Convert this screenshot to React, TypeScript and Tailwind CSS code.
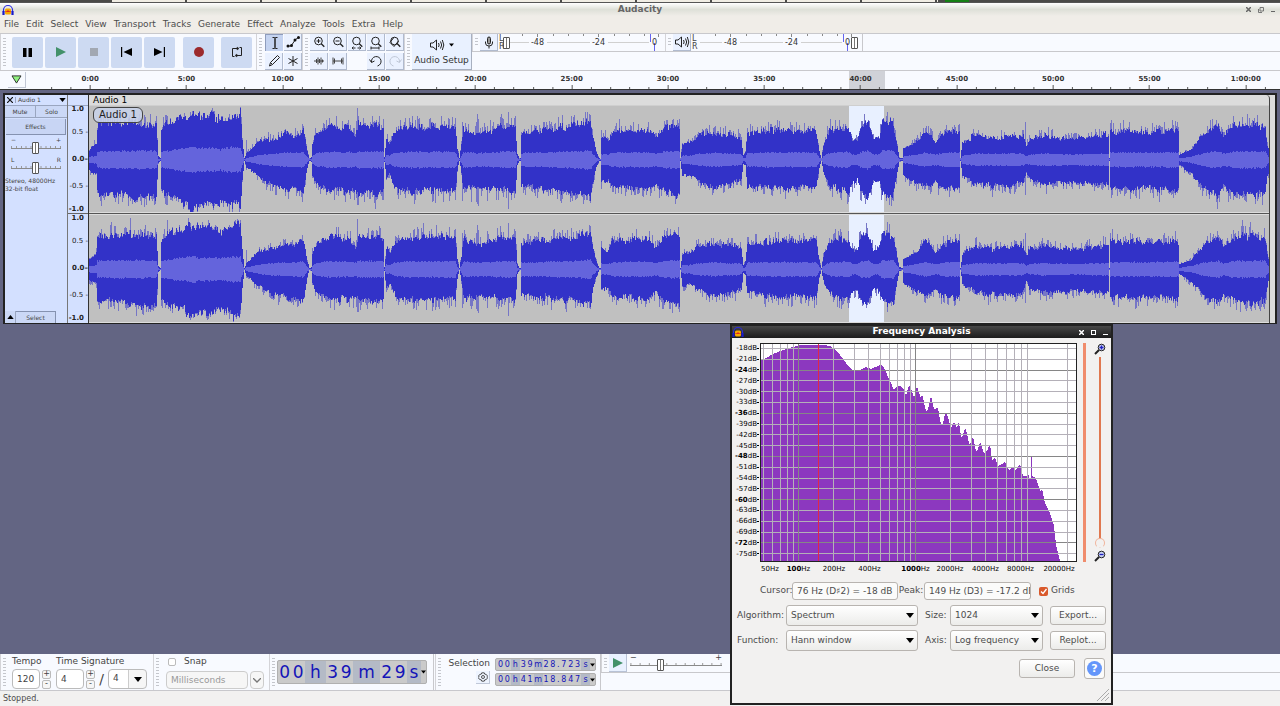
import type { ReactNode } from "react";

/* ---------- DATA ---------- */

const menus = ["File", "Edit", "Select", "View", "Transport", "Tracks", "Generate", "Effect", "Analyze", "Tools", "Extra", "Help"];

const times = ["0:00", "5:00", "10:00", "15:00", "20:00", "25:00", "30:00", "35:00", "40:00", "45:00", "50:00", "55:00", "1:00:00"];

// [x, peak up, peak down]
const envelope = [
  [0, 10, 12], [7, 16, 14], [8, 32, 32], [30, 35, 33], [50, 34, 37], [67, 32, 35], [69, 3, 3], [71, 1, 1], [72, 31, 32],
  [81, 37, 35], [96, 41, 42], [101, 44, 49], [111, 40, 42], [121, 42, 42], [131, 38, 41], [141, 43, 46], [151, 44, 45],
  [153, 20, 20], [155, 1, 1], [157, 6, 7], [171, 19, 18], [184, 20, 26], [195, 25, 28], [206, 23, 30], [214, 29, 31],
  [218, 8, 8], [220, 1, 1], [222, 2, 2], [223, 15, 15], [228, 27, 25], [241, 32, 29], [261, 30, 30], [266, 22, 28],
  [269, 33, 32], [294, 31, 32], [295, 2, 2], [297, 20, 18], [300, 17, 15], [306, 27, 27], [321, 32, 31], [345, 31, 30],
  [366, 32, 30], [368, 10, 10], [370, 1, 1], [372, 14, 12], [374, 30, 29], [386, 25, 27], [401, 27, 28], [411, 32, 29],
  [426, 31, 32], [428, 5, 5], [430, 1, 1], [431, 1, 1], [432, 26, 26], [461, 29, 29], [491, 33, 32], [501, 37, 38],
  [503, 25, 25], [507, 7, 7], [510, 1, 1], [511, 1, 1], [512, 21, 20], [519, 19, 21], [523, 28, 27], [561, 29, 29],
  [566, 22, 25], [576, 33, 32], [590, 32, 35], [591, 1, 1], [593, 15, 17], [599, 16, 15], [609, 24, 21], [626, 25, 28],
  [646, 23, 22], [652, 21, 20], [654, 4, 4], [656, 8, 6], [658, 25, 25], [681, 28, 28], [711, 28, 27], [727, 27, 27],
  [730, 8, 8], [732, 1, 1], [734, 14, 12], [741, 28, 25], [759, 29, 31], [763, 18, 22], [768, 19, 20], [771, 30, 30],
  [779, 35, 36], [784, 19, 20], [790, 22, 22], [793, 37, 33], [804, 34, 35], [807, 17, 17], [810, 2, 2], [813, 1, 1],
  [814, 10, 14], [826, 16, 22], [836, 28, 26], [846, 17, 22], [856, 26, 28], [870, 28, 28], [871, 1, 1], [873, 15, 15],
  [886, 24, 23], [901, 20, 25], [921, 22, 25], [934, 23, 23], [937, 14, 12], [941, 20, 20], [956, 23, 24], [971, 20, 22],
  [991, 20, 22], [1019, 24, 24], [1020, 1, 1], [1021, 27, 28], [1061, 27, 28], [1089, 28, 30], [1090, 5, 5], [1101, 9, 13],
  [1111, 21, 23], [1121, 28, 31], [1129, 31, 33], [1134, 22, 24], [1146, 33, 33], [1176, 32, 33], [1178, 15, 18], [1180, 7, 9],
];

const loudPeaks: Record<number, [number, number]> = {
  268: [52, 45], 269: [34, 45], 157: [20, 8], 388: [46, 44], 389: [41, 46], 419: [48, 49], 425: [42, 38], 387: [38, 42],
  500: [46, 41], 501: [45, 42], 101: [48, 53], 140: [46, 52], 346: [30, 43], 936: [38, 35], 870: [36, 33], 1075: [38, 30],
  360: [33, 41], 366: [42, 40], 382: [24, 42], 373: [38, 41], 398: [34, 41], 407: [30, 40], 328: [44, 35], 247: [44, 35],
};

const spectrum = [
  [0, 18], [6, 15], [13, 11], [23, 7], [33, 4], [40, 2], [46, 2], [63, 2], [70, 3], [74, 6], [80, 12], [86, 20], [93, 28],
  [100, 27], [106, 24], [111, 26], [118, 23], [121, 21], [124, 25], [130, 38], [134, 47], [137, 43], [140, 43], [144, 46],
  [146, 53], [149, 42], [152, 48], [154, 55], [157, 43], [161, 55], [162, 51], [166, 68], [168, 66], [171, 53], [174, 66],
  [178, 65], [181, 82], [183, 80], [185, 71], [187, 71], [191, 85], [194, 79], [197, 85], [199, 79], [201, 94], [203, 92],
  [205, 85], [207, 90], [209, 101], [211, 100], [213, 94], [216, 108], [218, 106], [220, 99], [224, 110], [227, 108],
  [230, 101], [232, 117], [235, 114], [238, 123], [242, 121], [245, 119], [249, 127], [253, 124], [255, 128], [260, 121],
  [263, 133], [267, 133], [268, 127], [269, 136], [271, 134], [271, 113], [272, 113], [272, 133], [276, 135], [280, 148],
  [282, 146], [285, 160], [290, 170], [294, 183], [296, 202], [300, 218],
];

const freqLabels = [
  { n: "50", w: "w-[22px]" },
  { n: "100", w: "w-[35px]", bold: true },
  { n: "200", w: "w-[36px]" },
  { n: "400", w: "w-[35px]" },
  { n: "1000", w: "ml-3 w-[33px]", bold: true },
  { n: "2000", w: "w-[36px]" },
  { n: "4000", w: "w-[35px]" },
  { n: "8000", w: "w-[35px]" },
  { n: "20000", w: "w-[42px]" },
];

/* ---------- WAVEFORM ---------- */

function levelAt(x: number) {
  let i = 0;
  while (i < envelope.length - 2 && envelope[i + 1][0] <= x) i++;
  const [x0, u0, d0] = envelope[i];
  const [x1, u1, d1] = envelope[i + 1];
  const t = (x - x0) / (x1 - x0);
  return [u0 + (u1 - u0) * t, d0 + (d1 - d0) * t];
}

function buildChannel(mid: number, gain: number, limit: number, start: number) {
  let seed = start;
  const rnd = () => {
    seed = (seed * 16807) % 2147483647;
    return seed / 2147483647;
  };
  let peaks = "";
  let body = "";
  let rms = "";
  let block = 1;
  for (let x = 0; x < 1180; x++) {
    const [u, d] = levelAt(x);
    if (x % 3 === 0) block = 0.98 + 0.16 * rnd();
    const up = u * gain * block * (0.9 + 0.16 * rnd());
    const down = d * gain * block * (0.9 + 0.16 * rnd());
    const a = rnd();
    const b = rnd();
    // the very loud passages stay almost solid
    const spread = u > 36 ? 0.1 : 0.36;
    let pu = up + a * a * a * u * spread;
    let pd = down + b * b * b * d * spread;
    if (loudPeaks[x]) {
      pu = Math.max(pu, loudPeaks[x][0] * gain);
      pd = Math.max(pd, loudPeaks[x][1] * gain);
    }
    const r = ((u + d) / 2) * 0.25 * (0.9 + 0.2 * rnd()) + (u > 38 ? 1 : 0);
    peaks += `M${x} ${(mid - Math.min(pu, limit)).toFixed(1)}h1V${(mid + Math.min(pd, limit)).toFixed(1)}h-1z`;
    body += `M${x} ${(mid - Math.min(up, limit)).toFixed(1)}h1V${(mid + Math.min(down, limit)).toFixed(1)}h-1z`;
    rms += `M${x} ${(mid - r).toFixed(1)}h1V${(mid + r + 0.5).toFixed(1)}h-1z`;
  }
  return { peaks, body, rms };
}

const channels = [buildChannel(53.5, 1, 53, 77), buildChannel(163, 0.96, 53, 4242)];

function Waveform() {
  return (
    <svg viewBox="0 0 1180 217" preserveAspectRatio="none" shapeRendering="crispEdges" className="block h-[217px] w-full bg-[#c0c0c0]">
      <rect x="760" width="35" height="217" fill="#e8f0ff" />
      {channels.map((c, i) => (
        <g key={i}>
          <path d={c.peaks} fill="#7676c6" />
          <path d={c.body} fill="#3232c8" />
          <path d={c.rms} fill="#6464dc" />
        </g>
      ))}
      <path d="M0 106.500H1180M0 108.500H1180" stroke="#dcdcdc" />
      <path d="M0 107.500H1180" stroke="#555" />
      <path d="M0 216.500H1180" stroke="#dcdcdc" />
    </svg>
  );
}

/* ---------- SMALL PIECES ---------- */

function Grip() {
  return (
    <div className="flex w-2 shrink-0 justify-center self-stretch border-l border-[#d4d4d8] py-1">
      <div className="w-[3px] bg-[repeating-linear-gradient(#c4c6cc_0_1px,transparent_1px_3px)]" />
    </div>
  );
}

function Icon({ children }: { children: ReactNode }) {
  return (
    <svg viewBox="0 0 16 16" className="size-4 shrink-0" fill="none" stroke="#222" strokeWidth="1">
      {children}
    </svg>
  );
}

function BigButton({ label, children }: { label: string; children: ReactNode }) {
  return (
    <button aria-label={label} className="flex h-[31px] w-[31px] items-center justify-center rounded-[2px] bg-[#cddaf2]">
      {children}
    </button>
  );
}

function ToolButton({ label, active, children }: { label: string; active?: boolean; children: ReactNode }) {
  return (
    <button
      aria-label={label}
      className={
        active
          ? "flex h-[17px] w-[18px] items-center justify-center border-t border-l border-[#8e9cbc] bg-[#c4d3f0]"
          : "flex h-[17px] w-[18px] items-center justify-center border-r border-b border-[#b0bace] bg-[#eaf1ff]"
      }
    >
      {children}
    </button>
  );
}

function Lens({ children }: { children?: ReactNode }) {
  return (
    <Icon>
      <circle cx="7.500" cy="7" r="3.800" />
      <path d="M10.300 9.800l3 3" strokeWidth="1.300" />
      {children}
    </Icon>
  );
}

function Speaker() {
  return (
    <Icon>
      <path d="M1.500 6v4h2.500l3.500 3V3L4 6z" />
      <path d="M9.500 6q1.300 2 0 4M11.500 4.500q2.400 3.500 0 7M13.300 3q3 5 0 10" />
    </Icon>
  );
}

function Arrow({ size = "h-[5px] w-2" }: { size?: string }) {
  return (
    <svg viewBox="0 0 8 5" className={size} fill="#000">
      <path d="M0 0h8L4 5z" />
    </svg>
  );
}

function Logo() {
  return (
    <svg viewBox="0 0 12 12" className="size-3" fill="none">
      <path d="M1.500 8V6a4.500 4.500 0 0 1 9 0v2" stroke="#2a2ae0" strokeWidth="1.200" />
      <rect x="3" y="4.500" width="6" height="6" rx="1.500" fill="#f6a800" />
      <path d="M3.500 8l1-1 1 1 .5-1.500.5 1.500 1-1 1 1" stroke="#e02020" strokeWidth="1" />
      <path d="M1.500 7v4M10.500 7v4" stroke="#1a1ac8" strokeWidth="2.200" />
    </svg>
  );
}

function TickSlider({ label, value, width }: { label: string; value: number; width: string }) {
  return (
    <div className={`relative h-3 ${width}`}>
      <svg viewBox="0 0 100 12" preserveAspectRatio="none" className="block h-3 w-full" stroke="#9a9a9a">
        <path d="M0 6.500H100" stroke="#8a8a8a" vectorEffect="non-scaling-stroke" />
        {[1, 11, 21, 30, 40, 50, 60, 70, 79, 89, 99].map((x) => (
          <path key={x} d={`M${x} 4V6`} vectorEffect="non-scaling-stroke" />
        ))}
      </svg>
      <input
        type="range"
        aria-label={label}
        defaultValue={value}
        className="absolute inset-0 h-3 w-full appearance-none bg-transparent [&::-webkit-slider-thumb]:h-3 [&::-webkit-slider-thumb]:w-[7px] [&::-webkit-slider-thumb]:appearance-none [&::-webkit-slider-thumb]:rounded-[1px] [&::-webkit-slider-thumb]:border [&::-webkit-slider-thumb]:border-[#555] [&::-webkit-slider-thumb]:bg-[linear-gradient(90deg,#fff_2px,#777_2px,#777_3px,#fff_3px)]"
      />
    </div>
  );
}

function Meter({ label, thumb }: { label: string; thumb: "left" | "right" }) {
  return (
    <div className="flex h-[17px] items-center">
      <div className="flex w-[9px] flex-col pl-px text-[8px] leading-[8px] text-[#444]">
        <span>L</span>
        <span>R</span>
      </div>
      <div className="relative flex h-[17px] w-[154px] items-center">
        <svg viewBox="0 0 154 17" className="absolute inset-0 h-full w-full" stroke="#888">
          <path d="M0 8.500H22M40 8.500H83M101 8.500H142" stroke="#d0d0d0" />
          <path d="M15.500 0v2M30.500 0v3M46.500 0v2M61.500 0v2M76.500 0v2M91.500 0v3M107.500 0v2M122.500 0v2M137.500 0v2M151.500 0v3" />
          <path d="M143.500 0V8M147.500 9V17" stroke="#6464f0" />
        </svg>
        <div className="relative flex flex-1 text-center text-[8px] leading-none text-[#333]">
          <span className="w-[61px]">-48</span>
          <span className="w-[61px]">-24</span>
          <span className="flex-1 pr-1 text-right">0</span>
        </div>
        <button
          aria-label={label}
          className={
            thumb === "left"
              ? "absolute -left-1 h-3 w-[7px] rounded-[1px] border border-[#555] bg-[linear-gradient(90deg,#fff_2px,#777_2px,#777_3px,#fff_3px)]"
              : "absolute -right-1 h-3 w-[7px] rounded-[1px] border border-[#555] bg-[linear-gradient(90deg,#fff_2px,#777_2px,#777_3px,#fff_3px)]"
          }
        />
      </div>
    </div>
  );
}

/* ---------- TOOLBARS ---------- */

function Toolbars() {
  return (
    <div className="flex h-[38px] border-y border-[#c8c8cc] bg-[#f8faff]">
      <Grip />
      <div className="flex items-center gap-[2px] pr-1 pl-1">
        <BigButton label="Pause">
          <svg viewBox="0 0 9 9" className="size-[9px]"><path d="M0 0h3.500v9H0zM5.500 0H9v9H5.500z" /></svg>
        </BigButton>
        <BigButton label="Play">
          <svg viewBox="0 0 10 10" className="size-[10px]" fill="#43916a"><path d="M0 0l10 5-10 5z" /></svg>
        </BigButton>
        <BigButton label="Stop">
          <span className="size-2 bg-[#a2a8b2]" />
        </BigButton>
        <BigButton label="Skip to start">
          <svg viewBox="0 0 11 10" className="h-[10px] w-[11px]"><path d="M0 0h1.200v10H0zM11 1v8L2.500 5z" /></svg>
        </BigButton>
        <BigButton label="Skip to end">
          <svg viewBox="0 0 11 10" className="h-[10px] w-[11px]"><path d="M9.800 0H11v10H9.800zM0 1v8l8.500-4z" /></svg>
        </BigButton>
        <div className="ml-[6px]">
          <BigButton label="Record">
            <span className="size-[10px] rounded-full bg-[#9c2a2c]" />
          </BigButton>
        </div>
        <div className="ml-[5px]">
          <BigButton label="Loop">
            <svg viewBox="0 0 12 12" className="size-3" fill="none" stroke="#222">
              <path d="M3.500 10.500h-2v-8H7M8.500 1.500h2v8H5" />
              <path d="M6 1l2 1.500L6 4zM6 8L4 9.500 6 11z" fill="#222" strokeWidth=".5" />
            </svg>
          </BigButton>
        </div>
      </div>
      <Grip />
      <div className="grid grid-cols-2 content-between gap-x-px pl-px">
        <ToolButton label="Selection tool" active>
          <Icon><path d="M5.500 2.500h2q.5 0 .5 1v9q0 1-.5 1h-2M10.500 2.500h-2q-.5 0-.5 1v9q0 1 .5 1h2" /></Icon>
        </ToolButton>
        <ToolButton label="Envelope tool">
          <Icon>
            <path d="M3 12h3l4.500-6.500 3-2" />
            <circle cx="3" cy="12" r="1.500" fill="#111" stroke="none" />
            <circle cx="6.500" cy="11.500" r="1.500" fill="#111" stroke="none" />
            <circle cx="10" cy="6" r="1.500" fill="#111" stroke="none" />
            <circle cx="13.500" cy="3.500" r="1.500" fill="#111" stroke="none" />
          </Icon>
        </ToolButton>
        <ToolButton label="Draw tool">
          <Icon><path d="M3.500 13l1-3.500 7-7L13.500 4.500l-7 7zM4.500 9.500L6.500 11.500" /></Icon>
        </ToolButton>
        <ToolButton label="Multi tool">
          <Icon><path d="M8 3v10M3.500 5.500l9 5M12.500 5.500l-9 5" /></Icon>
        </ToolButton>
      </div>
      <Grip />
      <div className="grid grid-cols-5 content-between gap-x-px">
        <ToolButton label="Zoom in"><Lens><path d="M5.500 7h4M7.500 5v4" /></Lens></ToolButton>
        <ToolButton label="Zoom out"><Lens><path d="M5.500 7h4" /></Lens></ToolButton>
        <ToolButton label="Fit selection"><Lens><path d="M3 14h3.500M8.500 14H12" /><path d="M4.500 12.500L3 14l1.500 1.500M10.500 12.500L12 14l-1.500 1.500" strokeWidth=".8" /></Lens></ToolButton>
        <ToolButton label="Fit project"><Lens><path d="M3 12.500v3M3 14h8M11 12.500v3" /></Lens></ToolButton>
        <ToolButton label="Zoom toggle"><Lens><path d="M7 3.300L3 8.500l4 4L11.500 7" /></Lens></ToolButton>
        <ToolButton label="Trim"><Icon><path d="M3 8h10M5.500 6v4M7 4.500v7M8.500 6v4M10 4.500v7M11.500 6.500v3" stroke="#444" /></Icon></ToolButton>
        <ToolButton label="Silence"><Icon><path d="M3 8h10M3 4.500v7M4.500 5.500v5M11.500 5.500v5M13 4.500v7" stroke="#444" /></Icon></ToolButton>
        <span />
        <ToolButton label="Undo"><Icon><path d="M3.500 9A4.800 4.800 0 1 1 9.500 13M1.500 6.500L3.500 9.500l3-1.500" /></Icon></ToolButton>
        <ToolButton label="Redo"><Icon><path d="M12.500 9A4.800 4.800 0 1 0 6.500 13M14.500 6.500l-2 3-3-1.500" stroke="#bfc7d6" /></Icon></ToolButton>
      </div>
      <Grip />
      <button className="flex w-[60px] flex-col items-center justify-center gap-px border-r border-b border-[#a8b0c0] bg-[#e9f1ff] text-[9px] leading-[12px] text-[#333]">
        <span className="flex items-center gap-1">
          <Speaker />
          <Arrow size="h-1 w-[5px]" />
        </span>
        Audio Setup
      </button>
      <div className="flex flex-1 flex-col">
        <div className="flex border-b border-[#c8c8cc]">
          <Grip />
          <ToolButton label="Recording level">
            <Icon><rect x="6.500" y="3" width="3" height="7" rx="1.500" fill="#999" /><path d="M4.500 7.500V9q0 3 3.500 3t3.500-3V7.500M8 12v2.500" /></Icon>
          </ToolButton>
          <Meter label="Recording volume" thumb="left" />
          <div className="ml-1 flex">
            <Grip />
          </div>
          <ToolButton label="Playback level"><Speaker /></ToolButton>
          <Meter label="Playback volume" thumb="right" />
          <div className="ml-2 border-l border-[#c8c8cc]" />
        </div>
      </div>
    </div>
  );
}

/* ---------- TIMELINE ---------- */

function Timeline() {
  return (
    <div className="relative flex h-[19px] overflow-hidden border-b border-[#333] bg-[#f8faff]">
      <div className="absolute inset-y-0 left-[66.33%] w-[2.8%] bg-[#d0d2d8]" />
      <button aria-label="Pinned play head" className="my-px ml-2 flex w-[18px] items-center justify-center border-r border-b border-[#c0c6d4]">
        <svg viewBox="0 0 12 10" className="h-[9px] w-[11px]" fill="#90f080" stroke="#222" strokeWidth="1">
          <path d="M1 1h10L6 9z" />
        </svg>
      </button>
      <div className="relative -mr-[14px] ml-4 grid flex-1 grid-cols-13">
        {times.map((t) => (
          <div key={t} className="flex flex-col items-center justify-between pt-1">
            <span className="text-[7px] leading-[9px] font-bold text-[#333]">{t}</span>
            <svg viewBox="0 0 100 4" preserveAspectRatio="none" className="block h-1 w-full" stroke="#555">
              <path d="M50 0V4M10 2V4M30 2V4M70 2V4M90 2V4" vectorEffect="non-scaling-stroke" />
            </svg>
          </div>
        ))}
      </div>
    </div>
  );
}

/* ---------- TRACK ---------- */

function VerticalScale() {
  return (
    <div className="flex h-[107px] flex-col justify-between text-[7px] leading-[7px] whitespace-nowrap text-[#222]">
      <span className="pr-1 text-right font-bold">1.0</span>
      <div className="text-right leading-[27px]">
        <div>0.5 -</div>
        <div className="font-bold">0.0–</div>
        <div>-0.5 -</div>
      </div>
      <span className="pr-1 text-right font-bold">-1.0</span>
    </div>
  );
}

function Track() {
  return (
    <div className="mx-[3px] mt-[3px] flex border-2 border-b border-[#222] bg-[#dcdcdc] text-[#444]">
      {/* CONTROL PANEL */}
      <div className="flex w-[62px] flex-col bg-[#d3e0ff] text-[6px] leading-none">
        <div className="flex h-[11px] items-center border-b border-[#9aa6c0]">
          <button aria-label="Close track" className="flex w-[10px] justify-center">
            <svg viewBox="0 0 6 6" className="size-[6px]" stroke="#111" strokeWidth="1.200"><path d="M0 0l6 6M6 0L0 6" /></svg>
          </button>
          <button className="flex flex-1 items-center justify-between border-l border-[#9aa6c0] pr-px pl-[2px]">
            Audio 1
            <Arrow size="h-1 w-[7px]" />
          </button>
        </div>
        <div className="grid h-3 grid-cols-2 border-b border-[#9aa6c0] bg-[#cbd8f6]">
          <button className="border-r border-[#9aa6c0]">Mute</button>
          <button>Solo</button>
        </div>
        <button className="mx-px mt-px h-4 border-r border-b border-[#8592b0] bg-[#c8d5f4]">Effects</button>
        <div className="flex flex-col px-[6px] pt-[3px]">
          <div className="flex h-1 justify-between leading-[4px]"><span>−</span><span>+</span></div>
          <TickSlider label="Gain" value={48} width="w-full" />
          <div className="mt-[3px] flex h-[5px] justify-between leading-[5px]"><span>L</span><span>R</span></div>
          <TickSlider label="Pan" value={48} width="w-full" />
        </div>
        <p className="mt-[3px] leading-[8px] whitespace-nowrap">
          Stereo, 48000Hz
          <br />
          32-bit float
        </p>
        <div className="mt-auto flex h-3">
          <button aria-label="Collapse" className="flex w-[11px] items-center justify-center border-r border-[#9aa6c0] bg-[#cbd8f6]">
            <svg viewBox="0 0 8 5" className="h-1 w-[7px]"><path d="M0 5h8L4 0z" /></svg>
          </button>
          <button className="w-10 border-t border-r border-[#8592b0] bg-[#cbd8f6]">Select</button>
        </div>
      </div>

      {/* SCALE */}
      <div className="w-[22px] border-r border-l border-[#777] border-r-[#333] bg-[#d3e0ff]">
        <div className="h-[11px] border-b border-[#9aa6c0]" />
        <VerticalScale />
        <div className="border-t border-[#666] pt-px"><VerticalScale /></div>
      </div>

      {/* CLIP */}
      <div className="relative flex-1 overflow-hidden rounded-t border-r border-[#444]">
        <div className="h-[11px] border-b border-[#cfcfcf] pl-1 text-[9px] leading-[10px] text-black">Audio 1</div>
        <Waveform />
        <div className="absolute top-3 left-1 rounded-md border border-[#444] bg-[#c8d2e8]/90 px-[5px] text-[10px] leading-[14px] text-[#222]">
          Audio 1
        </div>
      </div>
      <div className="w-[5px] bg-[#dcdcdc]" />
    </div>
  );
}

/* ---------- BOTTOM BAR ---------- */

function Spin() {
  return (
    <div className="flex flex-col gap-px">
      <button className="flex size-[9px] items-center justify-center rounded-[2px] border border-[#bbb] bg-[#f6f6f6] text-[8px] leading-none">+</button>
      <button className="flex size-[9px] items-center justify-center rounded-[2px] border border-[#bbb] bg-[#f6f6f6] text-[8px] leading-none">-</button>
    </div>
  );
}

function Digits({ text }: { text: string }) {
  return (
    <div className="flex h-[13px] w-[101px] items-center rounded-[2px] border border-[#b0b0b0] bg-[#cacaca] pl-px text-[8px] text-[#1414b8]">
      {text.split("").map((c, i) => (
        <span
          key={i}
          className={
            c === "." ? "w-1 text-center" : /\d/.test(c) ? "w-[7px] text-center" : "h-full w-[9px] bg-[#b4bac6] text-center leading-[11px]"
          }
        >
          {c}
        </span>
      ))}
      <button aria-label="Time format" className="ml-auto">
        <Arrow size="h-1 w-[5px]" />
      </button>
    </div>
  );
}

function BottomBar() {
  return (
    <div className="flex h-[37px] border-b border-[#c8c8cc] bg-[#f8faff] text-[9px] text-[#444]">
      <Grip />
      <div className="flex gap-[5px] pr-[6px] pl-1">
        <div>
          <label htmlFor="tempo" className="block leading-[14px]">Tempo</label>
          <div className="mt-px flex items-center gap-[2px]">
            <input id="tempo" defaultValue="120" className="h-5 w-[28px] rounded border border-[#bbb] bg-white px-1" />
            <Spin />
          </div>
        </div>
        <div>
          <label htmlFor="upper" className="block leading-[14px]">Time Signature</label>
          <div className="mt-px flex items-center gap-[2px]">
            <input id="upper" defaultValue="4" className="h-5 w-[28px] rounded border border-[#bbb] bg-white px-1" />
            <Spin />
            <span className="w-[9px] text-center text-[14px] leading-none">/</span>
            <div className="relative flex items-center">
              <select aria-label="Lower time signature" className="h-5 w-[39px] appearance-none rounded border border-[#bbb] bg-[linear-gradient(90deg,#fff_19px,#ccc_19px,#ccc_20px,#f6f6f6_20px)] pl-1">
                <option>4</option>
              </select>
              <span className="pointer-events-none absolute right-[5px]"><Arrow /></span>
            </div>
          </div>
        </div>
      </div>
      <Grip />
      <div className="px-[5px]">
        <label className="flex h-4 items-center gap-2 pl-[2px]">
          <input type="checkbox" className="size-2 appearance-none rounded-[2px] border border-[#bbb] bg-white" />
          Snap
        </label>
        <div className="mt-px flex gap-[2px]">
          <input aria-label="Snap to" disabled defaultValue="Milliseconds" className="h-[18px] w-[82px] rounded border border-[#ccc] bg-[#f6f6f6] px-1 text-[#999]" />
          <button aria-label="Snap options" className="flex h-[18px] w-[14px] items-center justify-center rounded border border-[#ccc] bg-[#f6f6f6]">
            <svg viewBox="0 0 8 5" className="h-[5px] w-2" fill="none" stroke="#777" strokeWidth="1.300"><path d="M0 0l4 4 4-4" /></svg>
          </button>
        </div>
      </div>
      <Grip />
      <div className="flex items-center pr-[6px]">
        <div className="flex h-6 w-[150px] items-center rounded-[2px] border border-[#b0b0b0] bg-[#cacaca] text-[17px] leading-[22px] text-[#1414b8]">
          {["00", "h", "39", "m", "29", "s"].map((part, i) =>
            i % 2 === 0 ? (
              <span key={i} className="flex w-[27px] justify-around">
                <span>{part[0]}</span>
                <span>{part[1]}</span>
              </span>
            ) : (
              <span key={i} className={part === "m" ? "w-[27px] bg-[#b4bac6] text-center" : part === "s" ? "w-[14px] bg-[#b4bac6] text-center" : "w-[21px] bg-[#b4bac6] text-center"}>
                {part}
              </span>
            )
          )}
          <button aria-label="Time format" className="ml-auto">
            <Arrow size="h-1 w-[5px]" />
          </button>
        </div>
      </div>
      <div className="w-[2px] border-l border-[#c8c8cc]" />
      <Grip />
      <div className="flex gap-[5px] pr-1 pl-px">
        <div className="flex w-[46px] flex-col items-end pt-[2px]">
          <span className="leading-[15px]">Selection</span>
          <button aria-label="Selection options" className="flex h-[13px] w-[14px] items-center justify-center border-r border-b border-[#c0c8d8] bg-[#eef4ff]">
            <svg viewBox="0 0 12 12" className="size-[10px]" fill="none" stroke="#333">
              <path d="M4.500 1h3l.5 1.500 2 .5 1.500 2-1 1 1 1-1.500 2-2 .5-.5 1.500h-3L4 9.500 2 9 .5 7l1-1-1-1L2 3l2-.5z" />
              <circle cx="6" cy="6" r="1.800" />
            </svg>
          </button>
        </div>
        <div className="flex flex-col gap-[2px] pt-1">
          <Digits text="00h39m28.723s" />
          <Digits text="00h41m18.847s" />
        </div>
      </div>
      <div className="flex-1 border-l border-[#c8c8cc]">
        <div className="flex h-[19px] items-center border-b border-[#c8c8cc]">
          <Grip />
          <button aria-label="Play at speed" className="flex h-[18px] w-[18px] items-center justify-center border-r border-b border-[#b8c2d6] bg-[#e9f1ff]">
            <svg viewBox="0 0 10 10" className="size-[10px]" fill="#43916a"><path d="M0 0l10 5-10 5z" /></svg>
          </button>
          <div className="ml-[3px]">
            <div className="flex h-1 w-[92px] justify-between text-[8px] leading-[6px]"><span>−</span><span>+</span></div>
            <TickSlider label="Playback speed" value={32} width="w-[92px]" />
          </div>
        </div>
      </div>
    </div>
  );
}

/* ---------- FREQUENCY ANALYSIS ---------- */

function SpectrumPlot() {
  const outline = spectrum.map(([x, y]) => `L${x} ${y}`).join("");
  const minor: number[] = [];
  const major = [38, 155];
  for (const f of [50, 60, 70, 80, 90, 200, 300, 400, 500, 600, 700, 800, 900, 2000, 3000, 4000, 5000, 6000, 7000, 8000, 9000, 20000]) {
    minor.push(Math.round(38 + 117 * Math.log10(f / 100)));
  }
  const rows = Array.from({ length: 20 }, (_, i) => i);
  return (
    <svg viewBox="0 0 317 219" shapeRendering="crispEdges" className="block h-[219px] w-[317px] bg-white" fill="none">
      <path d={`M0 219${outline}L317 219z`} fill="#8c38bf" />
      {rows.map((i) => (
        <path key={i} d={`M0 ${Math.round(5 + i * 10.8) + 0.5}H317`} stroke={i % 4 === 2 ? "#868686" : "#b4b0b8"} />
      ))}
      {minor.map((x) => (
        <path key={x} d={`M${x + 0.5} 0V219`} stroke="#b4b0b8" />
      ))}
      {major.map((x) => (
        <path key={x} d={`M${x + 0.5} 0V219`} stroke="#868686" />
      ))}
      <path d="M58.500 0V219" stroke="#e02848" />
      <rect x=".5" y=".5" width="316" height="218" stroke="#222" />
    </svg>
  );
}

function ZoomGlyph({ plus }: { plus?: boolean }) {
  return (
    <svg viewBox="0 0 12 12" className="size-3" fill="none" stroke="#222">
      <path d="M5 7L1 11" strokeWidth="2" />
      <circle cx="7.500" cy="4.500" r="3.300" fill="#c8d0f0" />
      <path d={plus ? "M5.500 4.500h4M7.500 2.500v4" : "M5.500 4.500h4"} stroke="#2020c0" strokeWidth="1.300" />
    </svg>
  );
}

function Choice({ id, label, value, labelWidth, width }: { id: string; label: string; value: string; labelWidth: string; width: string }) {
  return (
    <>
      <label htmlFor={id} className={labelWidth}>{label}</label>
      <div className="relative flex items-center">
        <select id={id} className={`h-[21px] appearance-none rounded-[3px] border border-[#b8b4b0] bg-linear-to-b from-white to-[#ececea] pl-1 ${width}`}>
          <option>{value}</option>
        </select>
        <span className="pointer-events-none absolute right-1"><Arrow /></span>
      </div>
    </>
  );
}

function PushButton({ children }: { children: ReactNode }) {
  return (
    <button className="h-[19px] w-14 rounded-[3px] border border-[#b8b4b0] bg-linear-to-b from-white to-[#ececea]">{children}</button>
  );
}

function FrequencyWindow() {
  return (
    <div className="absolute top-[324px] left-[730px] w-[383px] border-2 border-[#222] bg-[#f2f1f0] text-[9px] text-[#4c4c4c]">
      <div className="flex h-3 items-center bg-linear-to-b from-[#484848] to-[#1c1c1c] text-white">
        <Logo />
        <h2 className="flex-1 pl-6 text-center font-bold">Frequency Analysis</h2>
        <div className="flex w-9 items-center justify-around">
          <svg viewBox="0 0 5 5" className="size-[5px]" stroke="#fff" strokeWidth="1.500"><path d="M0 0l5 5M5 0L0 5" /></svg>
          <span className="size-[5px] border border-white" />
          <span className="mt-1 h-px w-[5px] bg-white" />
        </div>
      </div>

      {/* PLOT */}
      <div className="flex pt-[5px]">
        <div className="w-7">
          <div className="flex h-[216px] flex-col pr-px text-right text-[7px] leading-[10px] text-black">
            {Array.from({ length: 20 }, (_, i) => (
              <div key={i} className="flex flex-1 items-center justify-end">
                <span className={i % 4 === 2 ? "font-bold" : ""}>{-18 - i * 3}</span>dB<span className="h-px w-[2px] bg-black" />
              </div>
            ))}
          </div>
        </div>
        <SpectrumPlot />
        <div className="ml-[6px] w-[3px] bg-[#f08c6c]" />
        <div className="ml-2 flex h-[219px] w-3 flex-col items-center justify-between">
          <ZoomGlyph plus />
          <input
            type="range"
            aria-label="Vertical zoom"
            defaultValue={0}
            className="h-[191px] w-[10px] appearance-none bg-[linear-gradient(90deg,transparent_4px,#e07850_4px,#e07850_6px,transparent_6px)] [direction:rtl] [writing-mode:vertical-lr] [&::-webkit-slider-thumb]:size-[10px] [&::-webkit-slider-thumb]:appearance-none [&::-webkit-slider-thumb]:rounded-full [&::-webkit-slider-thumb]:border [&::-webkit-slider-thumb]:border-[#f0b49c] [&::-webkit-slider-thumb]:border-b-transparent [&::-webkit-slider-thumb]:bg-[#f2f1f0]"
          />
          <ZoomGlyph />
        </div>
      </div>
      <div className="flex h-[13px] pl-[27px] text-[7px] leading-[14px] text-black">
        {freqLabels.map((f) => (
          <div key={f.n} className={`text-center whitespace-nowrap ${f.w}`}>
            <span className={f.bold ? "font-bold" : ""}>{f.n}</span>Hz
          </div>
        ))}
      </div>

      {/* CONTROLS */}
      <div className="mt-[7px] flex items-center pl-7">
        <label htmlFor="cursor" className="w-8 whitespace-nowrap">Cursor:</label>
        <input id="cursor" readOnly value="76 Hz (D♯2) = -18 dB" className="h-[18px] w-[106px] rounded-[3px] border border-[#b8b4b0] bg-[#fbfbfa] pl-1" />
        <label htmlFor="peak" className="w-[26px] text-center whitespace-nowrap">Peak:</label>
        <input id="peak" readOnly value="149 Hz (D3) = -17.2 dB" className="h-[18px] w-[107px] rounded-[3px] border border-[#b8b4b0] bg-[#fbfbfa] pl-1" />
        <label className="ml-2 flex items-center gap-[3px]">
          <span className="relative flex">
            <input type="checkbox" defaultChecked className="size-[9px] appearance-none rounded-[2px] bg-[#d9592b]" />
            <svg viewBox="0 0 9 9" className="pointer-events-none absolute inset-0" fill="none" stroke="#fff" strokeWidth="1.300"><path d="M2 4.500L4 6.500 7.500 2" /></svg>
          </span>
          Grids
        </label>
      </div>
      <div className="mt-[5px] flex items-center px-[5px]">
        <Choice id="algorithm" label="Algorithm:" value="Spectrum" labelWidth="w-[49px]" width="w-[132px]" />
        <div className="ml-[7px] flex items-center">
          <Choice id="size" label="Size:" value="1024" labelWidth="w-[25px]" width="w-[93px]" />
        </div>
        <div className="ml-auto flex"><PushButton>Export...</PushButton></div>
      </div>
      <div className="mt-1 flex items-center px-[5px]">
        <Choice id="function" label="Function:" value="Hann window" labelWidth="w-[49px]" width="w-[132px]" />
        <div className="ml-[7px] flex items-center">
          <Choice id="axis" label="Axis:" value="Log frequency" labelWidth="w-[25px]" width="w-[93px]" />
        </div>
        <div className="ml-auto flex"><PushButton>Replot...</PushButton></div>
      </div>
      <div className="mt-[7px] flex items-center justify-end gap-[9px] pr-[6px]">
        <PushButton>Close</PushButton>
        <button className="flex size-[21px] items-center justify-center rounded-[3px] border border-[#b8b4b0] bg-[#fbfbfa]">
          <span className="flex size-[15px] items-center justify-center rounded-full bg-[#6496fa] text-[11px] leading-none font-bold text-white">?</span>
        </button>
      </div>
      <div className="flex h-6 items-end justify-end p-[2px]">
        <svg viewBox="0 0 12 12" className="size-3" stroke="#aaa"><path d="M0 12L12 0M4 12l8-8M8 12l4-4" /></svg>
      </div>
    </div>
  );
}

/* ---------- PAGE ---------- */

export default function App() {
  return (
    <div className="relative flex min-h-screen flex-col overflow-hidden bg-[#636583] font-['DejaVu_Sans',sans-serif]">
      <div className="flex h-[2px] bg-[#4a4a48]">
        <div className="ml-28 w-[826px] bg-[repeating-linear-gradient(90deg,#f0ede4_0_73px,#4a4a48_73px_75px)]" />
        <div className="ml-[7px] w-6 bg-[#158015]" />
      </div>
      <header className="flex h-[14px] items-center border-t border-[#555] bg-linear-to-b from-white via-[#dee0d8] to-[#f0ede8] px-[2px]">
        <Logo />
        <h1 className="flex-1 pl-6 text-center text-[9px] leading-none font-bold text-[#666]">Audacity</h1>
        <div className="flex w-9 items-center justify-around text-[#666]">
          <svg viewBox="0 0 5 5" className="size-[5px]" stroke="#666" strokeWidth="1.500"><path d="M0 0l5 5M5 0L0 5" /></svg>
          <svg viewBox="0 0 6 6" className="size-[6px]" stroke="#777" fill="none"><path d="M2 .5h3.500V4H2zM.5 2v3.500H4" /></svg>
          <span className="mt-1 h-px w-1 bg-[#666]" />
        </div>
      </header>
      <nav className="flex h-[17px] items-center gap-[7px] bg-[#f0ede8] px-1 pt-px text-[9px] text-[#4c4c4c]">
        {menus.map((m) => (
          <button key={m}>{m}</button>
        ))}
      </nav>
      <Toolbars />
      <Timeline />
      <main className="flex-1">
        <Track />
      </main>
      <BottomBar />
      <footer className="h-[15px] bg-[#f2f1f0] pl-[3px] text-[8px] leading-[16px] text-[#4c4c4c]">Stopped.</footer>
      <FrequencyWindow />
    </div>
  );
}
